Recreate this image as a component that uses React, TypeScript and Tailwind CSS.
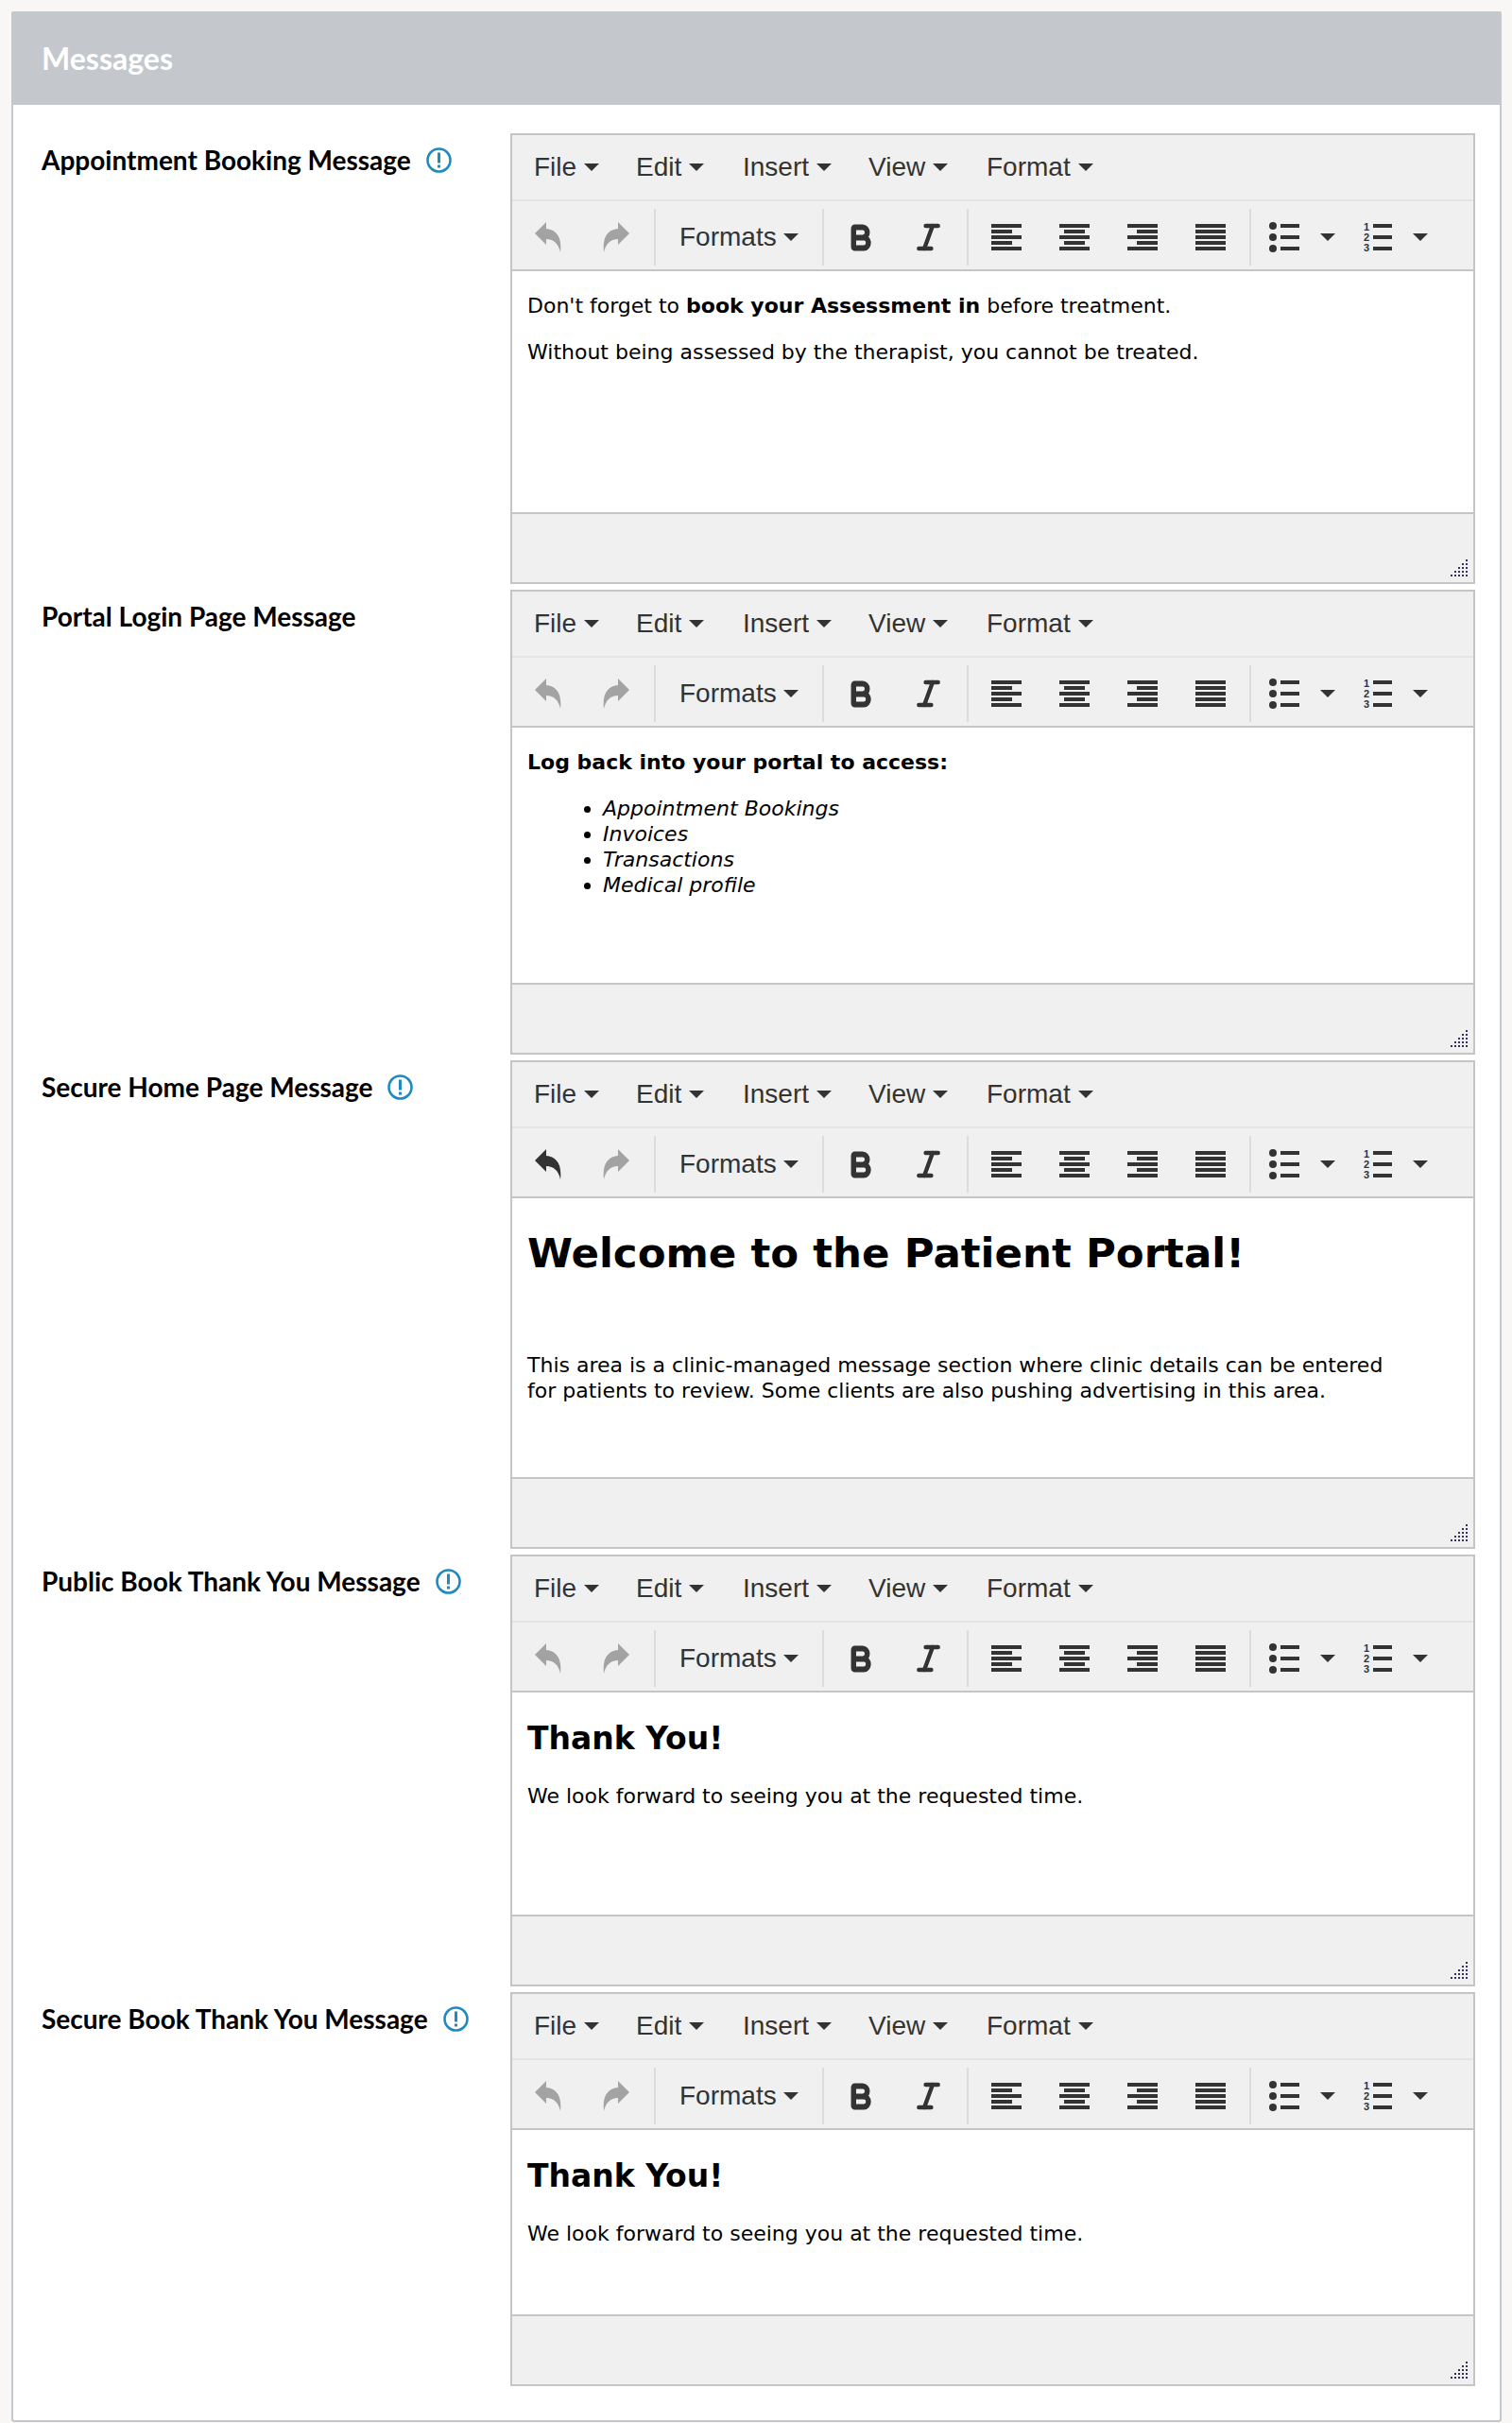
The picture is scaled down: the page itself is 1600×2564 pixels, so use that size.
import React from "react";
import { Bold, Italic } from "lucide-react";

function Caret() {
  return <span className="inline-block w-0 h-0 border-x-[8px] border-x-transparent border-t-[8px] border-t-[#333333]" />;
}

function MenuItem({ label, width }: { label: string; width: string }) {
  return (
    <div className={`flex items-center gap-[8px] ${width}`}>
      <span>{label}</span>
      <Caret />
    </div>
  );
}

function Arrow({ flip, active }: { flip?: boolean; active?: boolean }) {
  return (
    <svg width="28" height="32" viewBox="0 0 28 32" className={flip ? "-scale-x-100" : ""} fill={active ? "#333333" : "#a3a3a3"}>
      <path d="M0 12 L12 0 V7 C22 8 29 15 27 32 C25 23 20 18 12 18 V24 Z" />
    </svg>
  );
}

function Align({ kind }: { kind: "left" | "center" | "right" | "full" }) {
  const shortX = kind === "left" ? 0 : kind === "center" ? 5 : kind === "right" ? 10 : 0;
  const shortW = kind === "full" ? 32 : 22;
  return (
    <svg width="32" height="28" viewBox="0 0 32 28" fill="#333333">
      <rect x="0" y="0" width="32" height="4" />
      <rect x={shortX} y="6" width={shortW} height="4" />
      <rect x="0" y="12" width="32" height="4" />
      <rect x={shortX} y="18" width={shortW} height="4" />
      <rect x="0" y="24" width="32" height="4" />
    </svg>
  );
}

function Bullets() {
  return (
    <svg width="32" height="32" viewBox="0 0 32 32" fill="#333333">
      <circle cx="4" cy="4" r="4" />
      <circle cx="4" cy="16" r="4" />
      <circle cx="4" cy="28" r="4" />
      <rect x="12" y="2" width="20" height="4" />
      <rect x="12" y="14" width="20" height="4" />
      <rect x="12" y="26" width="20" height="4" />
    </svg>
  );
}

function Numbers() {
  return (
    <svg width="30" height="32" viewBox="0 0 30 32" fill="#333333">
      <text x="0" y="9" fontSize="11" fontWeight="700" fontFamily="'Liberation Sans', sans-serif">1</text>
      <text x="0" y="20" fontSize="11" fontWeight="700" fontFamily="'Liberation Sans', sans-serif">2</text>
      <text x="0" y="31" fontSize="11" fontWeight="700" fontFamily="'Liberation Sans', sans-serif">3</text>
      <rect x="10" y="2" width="20" height="4" />
      <rect x="10" y="14" width="20" height="4" />
      <rect x="10" y="26" width="20" height="4" />
    </svg>
  );
}

function Btn({ children }: { children: React.ReactNode }) {
  return <div className="w-[72px] flex items-center justify-center">{children}</div>;
}

function Sep({ ml }: { ml: string }) {
  return <div className={`w-[2px] h-[60px] bg-[#dcdcdc] ${ml}`} />;
}

function Info() {
  return (
    <svg width="27" height="27" viewBox="0 0 27 27" fill="none" className="shrink-0">
      <circle cx="13.5" cy="13.5" r="12" stroke="#1f8ac0" strokeWidth="2.6" />
      <rect x="12" y="5.5" width="3" height="11" fill="#1f8ac0" />
      <rect x="12" y="18.5" width="3" height="3" fill="#1f8ac0" />
    </svg>
  );
}

function Grip() {
  const dots: [number, number][] = [];
  for (let r = 0; r < 5; r++) for (let c = 4 - r; c < 5; c++) dots.push([c * 4, r * 4]);
  return (
    <svg width="18" height="18" viewBox="0 0 18 18" fill="#3a2f5c">
      {dots.map(([x, y], i) => (
        <rect key={i} x={x} y={y} width="2" height="2" />
      ))}
    </svg>
  );
}

function Editor({ contentH, active, children }: { contentH: string; active?: boolean; children: React.ReactNode }) {
  return (
    <div className="w-[1021px] border-2 border-[#c5c5c5] bg-white">
      <div className="h-[68px] bg-[#f0f0f0] flex items-center pl-[23px] text-[28px] text-[#333333] font-['Liberation_Sans',sans-serif]">
        <MenuItem label="File" width="w-[108px]" />
        <MenuItem label="Edit" width="w-[113px]" />
        <MenuItem label="Insert" width="w-[133px]" />
        <MenuItem label="View" width="w-[125px]" />
        <MenuItem label="Format" width="w-[130px]" />
      </div>
      <div className="h-[2px] bg-[#e2e4e7]" />
      <div className="h-[74px] pl-[2px] pt-[4px] bg-[#f0f0f0] flex items-center text-[28px] text-[#333333] font-['Liberation_Sans',sans-serif] border-b-2 border-[#c5c5c5]">
        <Btn><Arrow active={active} /></Btn>
        <Btn><Arrow flip /></Btn>
        <Sep ml="ml-[4px]" />
        <div className="w-[176px] pl-[25px] flex items-center gap-[7px]">
          <span>Formats</span>
          <Caret />
        </div>
        <Sep ml="" />
        <div className="ml-[2px] flex">
          <Btn>
            <Bold strokeWidth={4.5} color="#333333" preserveAspectRatio="none" className="w-[29px] h-[33px]" />
          </Btn>
          <Btn>
            <Italic strokeWidth={3} color="#333333" preserveAspectRatio="none" className="w-[35px] h-[36px]" />
          </Btn>
        </div>
        <Sep ml="ml-[5px]" />
        <div className="ml-[4px] flex">
          <Btn><Align kind="left" /></Btn>
          <Btn><Align kind="center" /></Btn>
          <Btn><Align kind="right" /></Btn>
          <Btn><Align kind="full" /></Btn>
        </div>
        <Sep ml="ml-[5px]" />
        <div className="ml-[19px] flex items-center">
          <Bullets />
          <div className="ml-[22px] flex"><Caret /></div>
          <div className="ml-[30px] flex"><Numbers /></div>
          <div className="ml-[22px] flex"><Caret /></div>
        </div>
      </div>
      <div className={`${contentH} overflow-hidden px-[16px] text-[22px] leading-[27px] text-black font-['DejaVu_Sans',sans-serif]`}>
        {children}
      </div>
      <div className="h-[74px] bg-[#f0f0f0] border-t-2 border-[#c5c5c5] flex justify-end items-end pr-[6px] pb-[6px]">
        <Grip />
      </div>
    </div>
  );
}

function Row({ label, info, contentH, active, children }: { label: string; info?: boolean; contentH: string; active?: boolean; children: React.ReactNode }) {
  return (
    <div className="flex">
      <div className="w-[496px] pt-[14px] flex items-center self-start gap-[16px] text-[28px] leading-[29px] font-bold text-black">
        <span>{label}</span>
        {info && <Info />}
      </div>
      <Editor contentH={contentH} active={active}>{children}</Editor>
    </div>
  );
}

function ThankYou() {
  return (
    <>
      <h2 className="pt-[31px] text-[33px] leading-[36px] font-bold">Thank You!</h2>
      <p className="mt-[29px]">We look forward to seeing you at the requested time.</p>
    </>
  );
}

export default function App() {
  return (
    <div className="min-h-[2564px] bg-[#f8f7f5] pt-[12px] px-[12px] font-['Lato',sans-serif]">
      <div className="w-[1577px] h-[2551px] border-x-2 border-b-2 border-[#c4c7cc] rounded-[3px] bg-white">
        <div className="h-[99px] -mx-[2px] bg-[#c4c7cc] rounded-t-[3px] flex items-center pl-[32px] text-[32px] font-bold text-white">
          Messages
        </div>
        <div className="pt-[30px] pl-[30px] flex flex-col gap-[6px]">
          <Row label="Appointment Booking Message" info contentH="h-[255px]">
            <p className="pt-[23px]">Don't forget to <b>book your Assessment in</b> before treatment.</p>
            <p className="mt-[22px]">Without being assessed by the therapist, you cannot be treated.</p>
          </Row>
          <Row label="Portal Login Page Message" contentH="h-[270px]">
            <p className="pt-[23px]"><b>Log back into your portal to access:</b></p>
            <ul className="mt-[22px] pl-[64px] ml-[16px] list-disc italic">
              <li>Appointment Bookings</li>
              <li>Invoices</li>
              <li>Transactions</li>
              <li>Medical profile</li>
            </ul>
          </Row>
          <Row label="Secure Home Page Message" info active contentH="h-[295px]">
            <h1 className="pt-[33px] text-[43.5px] leading-[50px] font-bold">Welcome to the Patient Portal!</h1>
            <p className="mt-[80px] w-[930px]">This area is a clinic-managed message section where clinic details can be entered for patients to review. Some clients are also pushing advertising in this area.</p>
          </Row>
          <Row label="Public Book Thank You Message" info contentH="h-[235px]">
            <ThankYou />
          </Row>
          <Row label="Secure Book Thank You Message" info contentH="h-[195px]">
            <ThankYou />
          </Row>
        </div>
      </div>
    </div>
  );
}
